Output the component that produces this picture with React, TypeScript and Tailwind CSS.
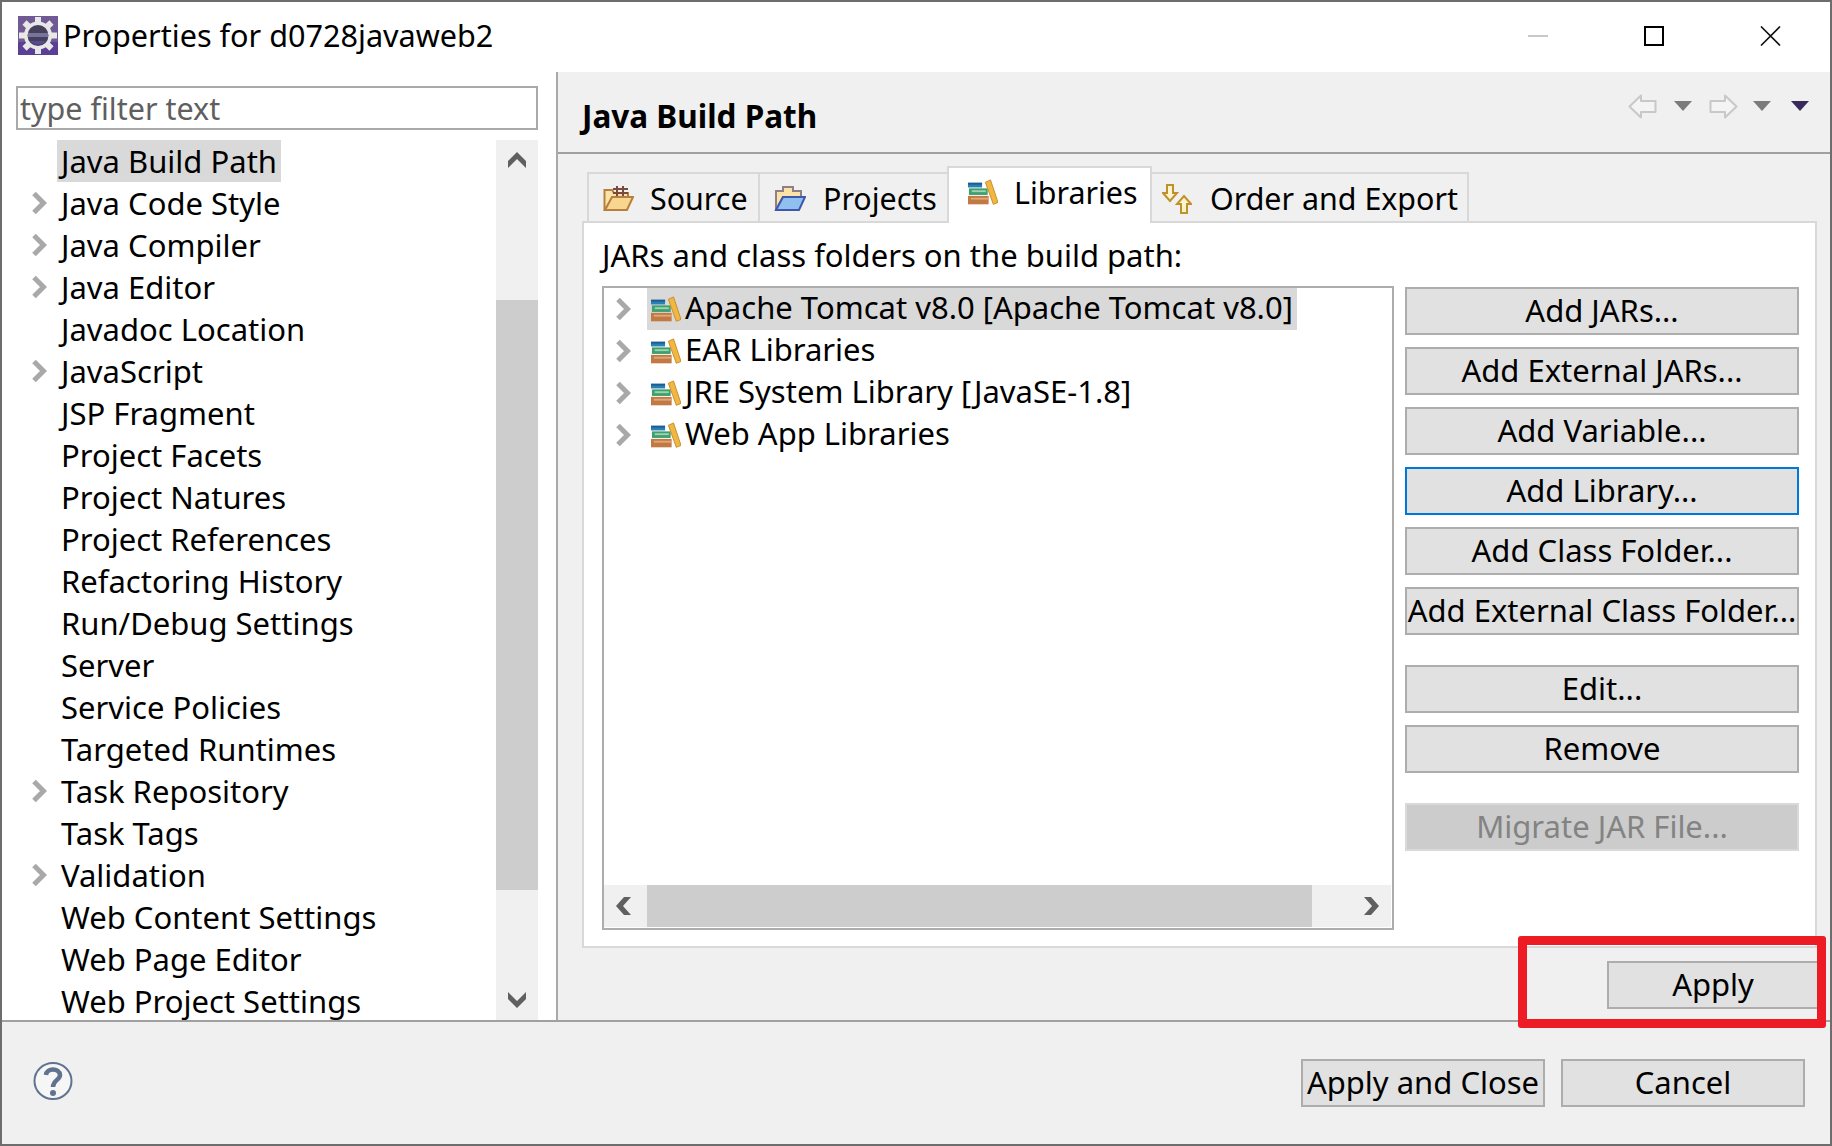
import React from "react";

const treeItems = [
  { label: "Java Build Path", selected: true },
  { label: "Java Code Style", arrow: true },
  { label: "Java Compiler", arrow: true },
  { label: "Java Editor", arrow: true },
  { label: "Javadoc Location" },
  { label: "JavaScript", arrow: true },
  { label: "JSP Fragment" },
  { label: "Project Facets" },
  { label: "Project Natures" },
  { label: "Project References" },
  { label: "Refactoring History" },
  { label: "Run/Debug Settings" },
  { label: "Server" },
  { label: "Service Policies" },
  { label: "Targeted Runtimes" },
  { label: "Task Repository", arrow: true },
  { label: "Task Tags" },
  { label: "Validation", arrow: true },
  { label: "Web Content Settings" },
  { label: "Web Page Editor" },
  { label: "Web Project Settings" },
];

const libraries = [
  "Apache Tomcat v8.0 [Apache Tomcat v8.0]",
  "EAR Libraries",
  "JRE System Library [JavaSE-1.8]",
  "Web App Libraries",
];

const TreeArrow = () => (
  <svg width="16" height="24" viewBox="0 0 16 24" className="shrink-0">
    <path d="M3 2.5 L12.5 12 L3 21.5" fill="none" stroke="#a9a9a9" strokeWidth="5" />
  </svg>
);

const ScrollArrow = ({ dir }: { dir: "up" | "down" | "left" | "right" }) => {
  const paths = {
    up: "M0 10 L9 1 L18 10 V17 L9 8 L0 17 Z",
    down: "M0 1 L9 10 L18 1 V8 L9 17 L0 8 Z",
    left: "M9 0 L1 9 L9 18 H16 L8 9 L16 0 Z",
    right: "M1 0 H8 L16 9 L8 18 H1 L9 9 Z",
  };
  return (
    <svg width="18" height="18" viewBox="0 0 18 18">
      <path d={paths[dir]} fill="#606060" />
    </svg>
  );
};

const LibraryIcon = ({ size = 32 }: { size?: number }) => (
  <svg width={size} height={size * 0.875} viewBox="0 0 32 28" className="shrink-0">
    <rect x="0" y="4" width="15" height="5" fill="#2a7fb8" />
    <rect x="0" y="4" width="15" height="2" fill="#1d5e8e" />
    <rect x="1" y="10" width="20" height="7" fill="#3fa06f" />
    <rect x="4" y="12" width="15" height="2" fill="#9ed3ae" />
    <rect x="0" y="18" width="22" height="9" fill="#c27a45" />
    <rect x="3" y="20" width="19" height="2" fill="#e0a878" />
    <path d="M18.5 3.5 L24 1 L32 25 L27 27 Z" fill="#f0b840" stroke="#c98a2a" strokeWidth="1" />
  </svg>
);

const SourceIcon = () => (
  <svg width="31" height="27" viewBox="0 0 31 27" className="shrink-0">
    <path d="M1.5 25 V5 H9 L11 8 H25 V12 H10 L2 25 Z" fill="#fbe3a8" stroke="#b5803e" strokeWidth="2" />
    <path d="M2 25 L9 12 H30 L24 25 Z" fill="#f8d68f" stroke="#b5803e" strokeWidth="2" />
    <path d="M14 1 V11 M20 1 V11 M10 4 H25 M10 8 H25" stroke="#7a4a3a" strokeWidth="2" fill="none" />
  </svg>
);

const ProjectsIcon = () => (
  <svg width="32" height="27" viewBox="0 0 32 27" className="shrink-0">
    <path d="M2 25 V6 H9 V2 H19 V6 H27 V12 H9 Z" fill="#fbe3a8" stroke="#8f7f86" strokeWidth="2" />
    <path d="M2 25 L9 12 H31 L25 25 Z" fill="#8fc0f0" stroke="#3f57ae" strokeWidth="2" />
  </svg>
);

const OrderIcon = () => (
  <svg width="30" height="30" viewBox="0 0 30 30" className="shrink-0">
    <path d="M5 1 H11 V9 H15 L8 17 L1 9 H5 Z" fill="#fff4d0" stroke="#c0912a" strokeWidth="2" />
    <path d="M19 29 H25 V20 H29 L22 12 L15 20 H19 Z" fill="#fff4d0" stroke="#c0912a" strokeWidth="2" />
  </svg>
);

const GearIcon = () => (
  <svg width="40" height="39" viewBox="0 0 40 39" className="shrink-0">
    <rect width="40" height="39" fill="#6f5a94" />
    <rect y="26" width="40" height="13" fill="#5b3f94" />
    <g stroke="#e8e8e8" strokeWidth="6">
      <path d="M20 1 V38 M1 19.5 H39 M6.5 6.5 L33.5 32.5 M33.5 6.5 L6.5 32.5" />
    </g>
    <circle cx="20" cy="19.5" r="14" fill="#e8e8e8" />
    <circle cx="20" cy="19.5" r="10.5" fill="#45405c" />
    <rect x="10" y="17" width="20" height="4" fill="#77739a" />
    <path d="M12 25 A10.5 10.5 0 0 0 28 25 Z" fill="#5a4a96" />
  </svg>
);

const NavArrow = ({ flip }: { flip?: boolean }) => (
  <svg width="29" height="25" viewBox="0 0 29 25" className={flip ? "rotate-180" : ""}>
    <path d="M1.5 12.5 L13 1.5 V7 H27.5 V18 H13 V23.5 Z" fill="#f4f4f4" stroke="#c8c8c8" strokeWidth="2" strokeLinejoin="round" />
  </svg>
);

const NavDrop = ({ color = "#7b7b7b" }: { color?: string }) => (
  <svg width="18" height="10" viewBox="0 0 18 10">
    <path d="M0 0 H18 L9 10 Z" fill={color} />
  </svg>
);

const Button = ({
  children,
  className = "",
  variant = "normal",
}: {
  children: React.ReactNode;
  className?: string;
  variant?: "normal" | "focused" | "disabled";
}) => {
  const look = {
    normal: "bg-[#e1e1e1] border-[#adadad] text-black",
    focused: "bg-[#e1e1e1] border-[#0078d7] text-black",
    disabled: "bg-[#cccccc] border-[#d9d9d9] text-[#838383]",
  };
  return (
    <div
      className={`h-[48px] flex items-center justify-center border-2 pb-[1px] whitespace-nowrap ${look[variant]} ${className}`}
    >
      {children}
    </div>
  );
};

export default function App() {
  return (
    <div
      className="relative w-[1832px] h-[1146px] box-border border-2 border-[#6d6d6d] bg-white flex flex-col overflow-hidden text-[31px] text-black"
      style={{ fontFamily: '"Noto Sans", "Open Sans", sans-serif' }}
    >
      {/* Title bar */}
      <div className="h-[70px] shrink-0 flex items-center pl-[16px] pb-[3px]">
        <GearIcon />
        <span className="ml-[5px] text-[30.6px] whitespace-nowrap">Properties for d0728javaweb2</span>
        <div className="ml-auto flex items-center">
          <div className="w-[20px] h-[2px] bg-[#c8c8c8] mr-[96px]" />
          <div className="w-[20px] h-[20px] border-2 border-black mr-[96px]" />
          <svg width="21" height="20" viewBox="0 0 21 20" className="mr-[49px]">
            <path d="M1 0.5 L20 19.5 M20 0.5 L1 19.5" stroke="#111" strokeWidth="1.6" />
          </svg>
        </div>
      </div>

      {/* Body */}
      <div className="h-[948px] shrink-0 flex">
        {/* Left side: filter and tree */}
        <div className="w-[554px] shrink-0 pl-[14px] pr-[18px] pt-[14px]">
          <div className="h-[44px] border-2 border-[#a9a9a9] flex items-center pl-[2px] text-[30.5px] text-[#5f5f5f] leading-none">
            type filter text
          </div>
          <div className="mt-[10px] h-[880px] flex">
            <div className="flex-1">
              {treeItems.map((item) => (
                <div key={item.label} className="h-[42px] flex items-center">
                  <div className="w-[41px] shrink-0 flex justify-end pr-[10px]">
                    {item.arrow && <TreeArrow />}
                  </div>
                  <span className={`h-[42px] flex items-center px-[4px] leading-[36px] whitespace-nowrap ${item.selected ? "bg-[#d9d9d9]" : ""}`}>
                    {item.label}
                  </span>
                </div>
              ))}
            </div>
            <div className="w-[42px] shrink-0 bg-[#f0f0f0] flex flex-col items-center">
              <div className="h-[160px] w-full flex justify-center pt-[11px]">
                <ScrollArrow dir="up" />
              </div>
              <div className="h-[590px] w-full bg-[#cdcdcd]" />
              <div className="flex-1 w-full flex items-end justify-center pb-[11px]">
                <ScrollArrow dir="down" />
              </div>
            </div>
          </div>
        </div>

        {/* Right side: page */}
        <div className="flex-1 border-l-2 border-[#a9a9a9] bg-[#f0f0f0] flex flex-col min-w-0">
          <div className="h-[82px] shrink-0 border-b-2 border-[#a0a0a0] flex items-center pl-[24px]">
            <span className="font-bold text-[31.5px] mt-[7px]">Java Build Path</span>
            <div className="ml-auto flex items-center mt-[-12px] pr-[21px]">
              <NavArrow />
              <div className="ml-[17px] mr-[17px]"><NavDrop /></div>
              <NavArrow flip />
              <div className="ml-[15px] mr-[20px]"><NavDrop /></div>
              <NavDrop color="#3a2a5c" />
            </div>
          </div>

          <div className="pl-[24px] pr-[13px] pt-[12px]">
            {/* Tabs */}
            <div className="h-[57px] pl-[5px] flex items-end relative z-10 mb-[-2px] text-[30.4px]">
              <div className="h-[51px] w-[173px] border-2 border-b-0 border-[#d8d8d8] flex items-center gap-[16px] pl-[14px]">
                <SourceIcon />
                <span>Source</span>
              </div>
              <div className="h-[51px] w-[187px] border-t-2 border-[#d8d8d8] flex items-center gap-[17px] pl-[14px]">
                <ProjectsIcon />
                <span>Projects</span>
              </div>
              <div className="h-[57px] w-[205px] border-2 border-b-0 border-[#d8d8d8] bg-white flex items-center gap-[16px] pl-[19px] pb-[6px]">
                <LibraryIcon size={30} />
                <span>Libraries</span>
              </div>
              <div className="h-[51px] w-[317px] border-t-2 border-r-2 border-[#d8d8d8] flex items-center gap-[18px] pl-[10px]">
                <OrderIcon />
                <span>Order and Export</span>
              </div>
            </div>

            {/* Tab panel */}
            <div className="h-[727px] border-2 border-[#d8d8d8] bg-white pl-[18px]">
              <div className="h-[63px] pt-[1px] flex items-center whitespace-nowrap">
                JARs and class folders on the build path:
              </div>
              <div className="flex gap-[11px]">
                <div className="w-[792px] h-[644px] border-2 border-[#adadad] flex flex-col justify-between pb-[1px] pr-[1px]">
                  <div>
                    {libraries.map((lib, i) => (
                      <div key={lib} className="h-[42px] flex items-center">
                        <div className="w-[11px] shrink-0" />
                        <TreeArrow />
                        <div className={`ml-[16px] h-[42px] flex items-center pl-[4px] pr-[4px] whitespace-nowrap ${i === 0 ? "bg-[#d9d9d9]" : ""}`}>
                          <LibraryIcon size={30} />
                          <span className="ml-[4px] mt-[-3px]">{lib}</span>
                        </div>
                      </div>
                    ))}
                  </div>
                  <div className="h-[42px] bg-[#f0f0f0] flex items-center">
                    <div className="w-[43px] pl-[11px]"><ScrollArrow dir="left" /></div>
                    <div className="w-[665px] h-full bg-[#cdcdcd]" />
                    <div className="flex-1 flex justify-end pr-[10px]"><ScrollArrow dir="right" /></div>
                  </div>
                </div>

                <div className="w-[394px] mt-[1px] flex flex-col gap-[12px]">
                  <Button>Add JARs...</Button>
                  <Button>Add External JARs...</Button>
                  <Button>Add Variable...</Button>
                  <Button variant="focused">Add Library...</Button>
                  <Button>Add Class Folder...</Button>
                  <Button>Add External Class Folder...</Button>
                  <Button className="mt-[18px]">Edit...</Button>
                  <Button>Remove</Button>
                  <Button className="mt-[18px]" variant="disabled">Migrate JAR File...</Button>
                </div>
              </div>
            </div>

            <div className="flex justify-end pt-[13px]">
              <Button className="w-[210px] border-r-0">Apply</Button>
            </div>
          </div>
        </div>
      </div>

      {/* Footer */}
      <div className="relative flex-1 border-t-2 border-[#a0a0a0] bg-[#f0f0f0] flex items-start pl-[31px] pr-[25px] pt-[37px]">
        <svg width="40" height="38" viewBox="0 0 40 38" className="mt-[3px]">
          <ellipse cx="20" cy="19" rx="18.5" ry="18" fill="#f6f6f6" stroke="#5f7391" strokeWidth="2" />
          <path d="M13 13 C13.5 5.5 26.5 5.5 27 13 C27 18 20 18 20 25" fill="none" stroke="#5f7391" strokeWidth="4.5" />
          <circle cx="20" cy="31" r="3" fill="#5f7391" />
        </svg>
        <div className="ml-auto flex gap-[16px]">
          <Button className="w-[244px]">Apply and Close</Button>
          <Button className="w-[244px]">Cancel</Button>
        </div>
      </div>

      {/* Red annotation box round the Apply button */}
      <div className="absolute left-[1516px] top-[934px] w-[308px] h-[92px] border-[9px] border-[#ed1c24] rounded-[3px]" />
    </div>
  );
}
